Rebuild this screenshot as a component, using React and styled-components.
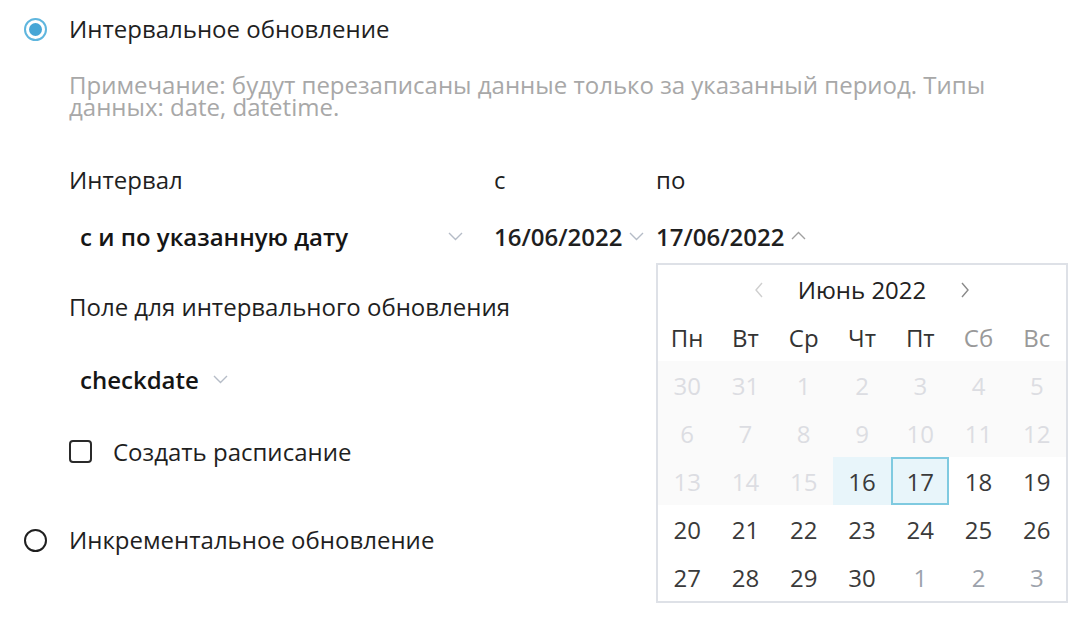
import styled, { createGlobalStyle } from 'styled-components';

const GlobalStyle = createGlobalStyle`
    body {
        margin:0;
        background:#fff;
        font-family:"Open Sans", "Noto Sans", sans-serif;
        color:#1f1f1f;
    }
`;

const weeks = [
    [30, 31, 1, 2, 3, 4, 5],
    [6, 7, 8, 9, 10, 11, 12],
    [13, 14, 15, 16, 17, 18, 19],
    [20, 21, 22, 23, 24, 25, 26],
    [27, 28, 29, 30, 1, 2, 3],
];
const weekdays = ['Пн', 'Вт', 'Ср', 'Чт', 'Пт', 'Сб', 'Вс'];

function dayState(week, idx) {
    if (week < 2 || (week === 2 && idx < 3)) return 'disabled';
    if (week === 2 && idx === 3) return 'range';
    if (week === 2 && idx === 4) return 'selected';
    if (week === 4 && idx > 3) return 'next';
    return 'normal';
}

function Chevron({ up }) {
    return (
        <ChevronSvg width="15" height="9" viewBox="0 0 15 9" $up={up}>
            <polyline points={up ? '1,8 7.5,1.5 14,8' : '1,1 7.5,7.5 14,1'} fill="none" strokeWidth="1.4" />
        </ChevronSvg>
    );
}

function Arrow({ dir, muted }) {
    return (
        <ArrowSvg width="10" height="16" viewBox="0 0 10 16" $muted={muted}>
            <polyline points={dir === 'left' ? '8,1 2,8 8,15' : '2,1 8,8 2,15'} fill="none" strokeWidth="1.4" />
        </ArrowSvg>
    );
}

function App() {
    return (
        <Page>
            <GlobalStyle />
            <RadioRow>
                <Radio $checked />
                <span>Интервальное обновление</span>
            </RadioRow>

            <Section>
                <Note>
                    Примечание: будут перезаписаны данные только за указанный период. Типы данных: date, datetime.
                </Note>

                <FormGrid>
                    <Label>Интервал</Label>
                    <Label>с</Label>
                    <Label>по</Label>

                    <Select $width="383px">
                        <span>с и по указанную дату</span>
                        <Chevron />
                    </Select>
                    <DateField>
                        <span>16/06/2022</span>
                        <Chevron />
                    </DateField>
                    <DateCell>
                        <DateField>
                            <span>17/06/2022</span>
                            <Chevron up />
                        </DateField>
                        <Calendar>
                            <CalHeader>
                                <Arrow dir="left" muted />
                                <MonthTitle>Июнь 2022</MonthTitle>
                                <Arrow dir="right" />
                            </CalHeader>
                            <DayGrid>
                                {weekdays.map((d, i) => (
                                    <Weekday key={d} $weekend={i > 4}>{d}</Weekday>
                                ))}
                                {weeks.map((week, w) =>
                                    week.map((day, i) => (
                                        <Day key={`${w}-${i}`} $state={dayState(w, i)}>{day}</Day>
                                    ))
                                )}
                            </DayGrid>
                        </Calendar>
                    </DateCell>
                </FormGrid>

                <FieldLabel>Поле для интервального обновления</FieldLabel>
                <Select>
                    <span>checkdate</span>
                    <Chevron />
                </Select>

                <CheckRow>
                    <Checkbox />
                    <span>Создать расписание</span>
                </CheckRow>
            </Section>

            <RadioRow $spaced>
                <Radio />
                <span>Инкрементальное обновление</span>
            </RadioRow>
        </Page>
    );
}

const Page = styled.div`
    padding:13px 0 0 24px;
    font-size:24px;
    height:609px;
    box-sizing:border-box;
    overflow:hidden;
`;

const RadioRow = styled.div`
    display:flex;
    align-items:center;
    gap:22px;
    height:30px;
    margin-top:${p => p.$spaced ? '58px' : '0'};
    color:#1f1f1f;
`;

const Radio = styled.span`
    width:23px;
    height:23px;
    box-sizing:border-box;
    border-radius:50%;
    border:2px solid ${p => p.$checked ? '#5fb6de' : '#1f1f1f'};
    display:flex;
    align-items:center;
    justify-content:center;
    margin-top:2px;
    &::after {
        content:'';
        display:${p => p.$checked ? 'block' : 'none'};
        width:13px;
        height:13px;
        border-radius:50%;
        background:#46a6d6;
    }
`;

const Section = styled.div`
    padding-left:45px;
`;

const Note = styled.div`
    margin-top:31px;
    width:960px;
    line-height:22px;
    color:#a8a8a8;
`;

const FormGrid = styled.div`
    margin-top:47px;
    display:grid;
    grid-template-columns:425px 162px auto;
    grid-template-rows:30px 30px;
    row-gap:26px;
`;

const Label = styled.div`
    line-height:30px;
    color:#1f1f1f;
`;

const Select = styled.div`
    display:flex;
    align-items:center;
    justify-content:space-between;
    gap:14px;
    width:${p => p.$width || 'max-content'};
    height:30px;
    padding-left:11px;
    margin-top:${p => p.$width ? '0' : '42px'};
    font-weight:600;
    color:#151515;
`;

const DateField = styled.div`
    display:flex;
    align-items:center;
    gap:6px;
    height:30px;
    font-weight:600;
    color:#1f1f1f;
`;

const DateCell = styled.div`
    position:relative;
`;

const ChevronSvg = styled.svg`
    stroke:${p => p.$up ? '#a0a0a0' : '#b5bcc7'};
    flex-shrink:0;
    margin-top:${p => p.$up ? '-2px' : '1px'};
`;

const ArrowSvg = styled.svg`
    stroke:${p => p.$muted ? '#cfcfcf' : '#8a8a8a'};
`;

const Calendar = styled.div`
    position:absolute;
    top:42px;
    left:0;
    width:412px;
    box-sizing:border-box;
    border:2px solid #dee1e7;
    background:#fff;
    z-index:2;
`;

const CalHeader = styled.div`
    display:flex;
    align-items:center;
    justify-content:center;
    gap:34px;
    height:49px;
`;

const MonthTitle = styled.div`
    color:#222;
`;

const DayGrid = styled.div`
    display:grid;
    grid-template-columns:repeat(7, 1fr);
    grid-template-rows:47px repeat(5, 48px);
`;

const Weekday = styled.div`
    display:flex;
    align-items:center;
    justify-content:center;
    color:${p => p.$weekend ? '#999' : '#333'};
`;

const dayColors = {
    disabled: '#dcdde2',
    range: '#3a3a3a',
    selected: '#3a3a3a',
    next: '#9ca2ab',
    normal: '#3a3a3a',
};

const dayBg = {
    disabled: '#fafafa',
    range: '#e8f5fa',
    selected: '#e8f5fa',
    next: '#fff',
    normal: '#fff',
};

const Day = styled.div`
    display:flex;
    align-items:center;
    justify-content:center;
    box-sizing:border-box;
    color:${p => dayColors[p.$state]};
    background:${p => dayBg[p.$state]};
    border:${p => p.$state === 'selected' ? '2px solid #7fcae0' : 'none'};
`;

const FieldLabel = styled.div`
    margin-top:41px;
    line-height:30px;
`;

const CheckRow = styled.div`
    display:flex;
    align-items:center;
    gap:21px;
    height:30px;
    margin-top:42px;
`;

const Checkbox = styled.span`
    width:23px;
    height:23px;
    box-sizing:border-box;
    border:2px solid #2a2a2a;
    border-radius:4px;
    margin-top:1px;
`;

export default App;
